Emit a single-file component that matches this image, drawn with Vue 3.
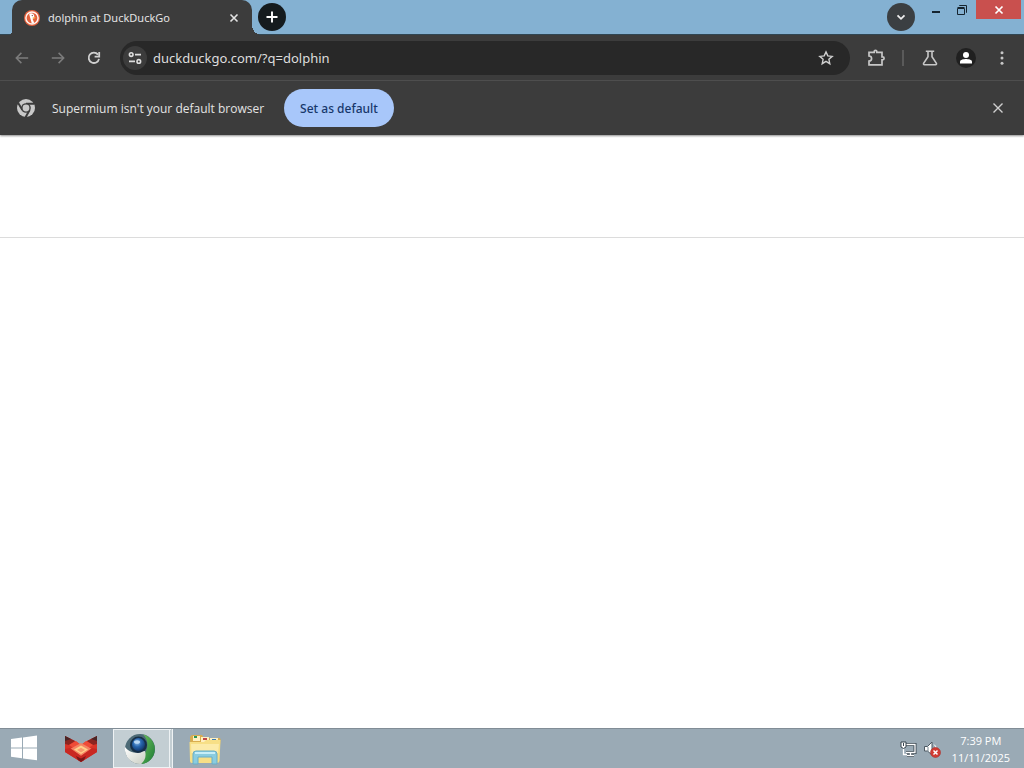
<script setup>
import { ref } from 'vue'

const address = ref('duckduckgo.com/?q=dolphin')
</script>

<template>
  <div class="desktop">
    <header class="tabstrip">
      <div class="tab">
        <svg class="favicon" viewBox="0 0 16 16" aria-hidden="true">
          <circle cx="8" cy="8" r="8" fill="#e3603c" />
          <circle cx="8" cy="8" r="6.1" fill="none" stroke="#fff4ee" stroke-width="1.5" />
          <path d="M5.2 4.2C6 2.8 9.6 3 10.2 5.6L10.4 8L8.6 9L10.2 12.8L7.8 13.4L6.4 8.6Z" fill="#fff" />
          <path d="M8.6 7.4L11.6 7.1L11 8.4L8.8 8.8Z" fill="#f3ae45" />
          <circle cx="8.3" cy="5.6" r=".7" fill="#724a40" />
        </svg>
        <span class="tab-title">dolphin at DuckDuckGo</span>
        <button class="icon-btn tab-close" aria-label="Close tab">
          <svg viewBox="0 0 16 16" width="16" height="16"><path d="M4.5 4.5L11.5 11.5M11.5 4.5L4.5 11.5" stroke="#e3e3e3" stroke-width="1.6" /></svg>
        </button>
      </div>
      <button class="round new-tab" aria-label="New tab">
        <svg viewBox="0 0 16 16" width="16" height="16"><path d="M8 2.5V13.5M2.5 8H13.5" stroke="#fff" stroke-width="1.9" /></svg>
      </button>
      <div class="caption">
        <button class="round search-tabs" aria-label="Search tabs">
          <svg viewBox="0 0 16 16" width="16" height="16"><path d="M4.5 6.3L8 9.8L11.5 6.3" fill="none" stroke="#eee" stroke-width="1.8" /></svg>
        </button>
        <button class="win-btn minimise" aria-label="Minimize">
          <svg viewBox="0 0 12 12" width="12" height="12"><path d="M2 8H10" stroke="#15242f" stroke-width="2" /></svg>
        </button>
        <button class="win-btn restore" aria-label="Restore">
          <svg viewBox="0 0 12 12" width="12" height="12" fill="none" stroke="#15242f"><path d="M1.5 4.5H8.5V10.5H1.5ZM1.5 3.5H8.5M3.5 2V1.5H10.5V8.5H10" /></svg>
        </button>
        <button class="win-btn close" aria-label="Close">
          <svg viewBox="0 0 12 12" width="12" height="12"><path d="M2.5 2.5L9.5 9.5M9.5 2.5L2.5 9.5" stroke="#fff" stroke-width="1.7" /></svg>
        </button>
      </div>
    </header>

    <nav class="toolbar" aria-label="Browser toolbar">
      <div class="nav-btns">
        <button class="icon-btn" aria-label="Back">
          <svg viewBox="0 0 16 16" width="16" height="16" fill="none" stroke="#7c7c7c" stroke-width="1.5"><path d="M14.2 8H2.5M7.4 2.9L2.3 8L7.4 13.1" /></svg>
        </button>
        <button class="icon-btn" aria-label="Forward">
          <svg viewBox="0 0 16 16" width="16" height="16" fill="none" stroke="#7c7c7c" stroke-width="1.5"><path d="M1.8 8H13.5M8.6 2.9L13.7 8L8.6 13.1" /></svg>
        </button>
        <button class="icon-btn" aria-label="Reload">
          <svg viewBox="0 0 16 16" width="16" height="16" fill="none" stroke="#d0d0d0" stroke-width="1.8"><path d="M13 8.8A5.2 5.2 0 1 1 12 4.6" /><path d="M13.2 2V6.6H8.6" /></svg>
        </button>
      </div>
      <form class="omnibox" @submit.prevent>
        <button type="button" class="site-info" aria-label="View site information">
          <svg viewBox="0 0 16 16" width="16" height="16" fill="none" stroke="#dedede" stroke-width="1.6"><circle cx="4.2" cy="4.6" r="1.8" /><path d="M8 4.6H14M2 11.4H8" /><circle cx="11.8" cy="11.4" r="1.8" /></svg>
        </button>
        <input v-model="address" class="address" type="text" aria-label="Address and search bar" spellcheck="false" />
        <button type="button" class="icon-btn" aria-label="Bookmark this tab">
          <svg viewBox="0 0 16 16" width="16" height="16" fill="none" stroke="#d0d0d0" stroke-width="1.4"><path d="M8 1.9L9.8 5.9L14.2 6.4L10.9 9.3L11.8 13.7L8 11.4L4.2 13.7L5.1 9.3L1.8 6.4L6.2 5.9Z" /></svg>
        </button>
      </form>
      <div class="actions">
        <button class="icon-btn" aria-label="Extensions">
          <svg viewBox="0 0 18 18" width="18" height="18" fill="none" stroke="#c7c7c7" stroke-width="1.7"><path d="M2 3.3H7.2V2.6A1.3 1.3 0 0 1 9.8 2.6V3.3H15V7.8H15.6A1.4 1.4 0 0 1 15.6 10.8H15V15.8H2V12.2A2.6 2.6 0 0 0 2 7Z" /></svg>
        </button>
        <span class="divider"></span>
        <button class="icon-btn" aria-label="Experiments">
          <svg viewBox="0 0 18 18" width="18" height="18" fill="none" stroke="#c7c7c7" stroke-width="1.6"><path d="M4.8 2.3H13.2M7 2.5V7.8L2.6 14.3Q2.2 15.6 3.5 15.8H14.5Q15.8 15.6 15.4 14.3L11 7.8V2.5" /></svg>
        </button>
        <button class="profile" aria-label="Profile">
          <svg viewBox="0 0 20 20" width="20" height="20"><circle cx="10" cy="10" r="10" fill="#202020" /><circle cx="10" cy="7" r="3" fill="#fff" /><path d="M4 15.5V13.5C4 11.5 8 10.9 10 10.9S16 11.5 16 13.5V15.5Z" fill="#fff" /></svg>
        </button>
        <button class="icon-btn" aria-label="Menu">
          <svg viewBox="0 0 16 16" width="16" height="16" fill="#c7c7c7"><circle cx="8" cy="2.7" r="1.5" /><circle cx="8" cy="8" r="1.5" /><circle cx="8" cy="13.3" r="1.5" /></svg>
        </button>
      </div>
    </nav>

    <section class="infobar" aria-label="Default browser">
      <svg class="product" viewBox="0 0 20 20" width="20" height="20" aria-hidden="true">
        <circle cx="10" cy="10" r="9" fill="#c9c9c9" />
        <circle cx="10" cy="10" r="4.8" fill="#3c3c3c" />
        <path d="M10 5.8H18.2M6.4 12.1L2.2 5M13.6 12.1L9.6 19.2" fill="none" stroke="#3c3c3c" stroke-width="2" />
        <circle cx="10" cy="10" r="3.4" fill="#c9c9c9" />
      </svg>
      <span class="message">Supermium isn't your default browser</span>
      <button class="default-btn">Set as default</button>
      <button class="icon-btn dismiss" aria-label="Dismiss">
        <svg viewBox="0 0 16 16" width="16" height="16"><path d="M3.5 3.5L12.5 12.5M12.5 3.5L3.5 12.5" stroke="#d0d0d0" stroke-width="1.4" /></svg>
      </button>
    </section>

    <main class="page">
      <div class="page-header"></div>
    </main>

    <footer class="taskbar">
      <button class="task start" aria-label="Start">
        <svg viewBox="0 0 28 28" width="28" height="28" fill="#fff"><path d="M1 4L12 2.5V12.4H1ZM13 2.4L27 .5V12.4H13ZM1 13.4H12V23.3L1 21.8ZM13 13.4H27V25.3L13 23.4Z" /></svg>
      </button>
      <button class="task fox" aria-label="Fox">
        <svg viewBox="0 0 34 28" width="34" height="28">
          <path d="M1 1L11 6L17 10L23 6L33 1V17L17 27L1 17Z" fill="#d93428" />
          <path d="M1 1L11 6L5 10L1 9ZM33 1L23 6L29 10L33 9Z" fill="#8c2520" />
          <path d="M1 1L7 4L1 6ZM33 1L27 4L33 6Z" fill="#4b2525" />
          <path d="M5 10L12 6L17 10L22 6L29 10L17 18Z" fill="#ef4b37" />
          <path d="M6 14L17 8L28 14L17 21Z" fill="#f58363" />
          <path d="M10 14.5L17 10.5L24 14.5L17 19Z" fill="#ffd08b" />
          <path d="M13 15L17 12.7L21 15L17 17.4Z" fill="#f79a6b" />
          <path d="M1 14L6 13L17 21L28 13L33 14V17L17 27L1 17Z" fill="#c92822" />
          <path d="M12 21L17 23.5L22 21L20 25L17 27L14 25Z" fill="#7c1718" />
        </svg>
      </button>
      <button class="task active" aria-label="Supermium">
        <svg viewBox="0 0 32 32" width="32" height="32">
          <defs>
            <linearGradient id="leaf" x1="0" y1="0" x2="1" y2="1"><stop offset="0" stop-color="#6cc05c" /><stop offset="1" stop-color="#1c7a35" /></linearGradient>
            <linearGradient id="silver" x1="0" y1="0" x2="1" y2="1"><stop offset="0" stop-color="#fff" /><stop offset="1" stop-color="#c9cdc2" /></linearGradient>
            <radialGradient id="eye" cx=".4" cy=".35" r=".65"><stop offset="0" stop-color="#8ebcec" /><stop offset=".5" stop-color="#2866ae" /><stop offset="1" stop-color="#143a70" /></radialGradient>
          </defs>
          <circle cx="16" cy="16" r="15" fill="#4c6a76" />
          <path d="M19 1.5A15 15 0 0 1 18 31C17 27 18 24 21 20C25 14 24 6 19 1.5Z" fill="url(#leaf)" />
          <circle cx="14.5" cy="12" r="8.5" fill="#172f48" />
          <path d="M1 14C3 17 8 20 14 20C17 20 19 18 21 18C22.500 23 21 28 17 31A15 15 0 0 1 1 14Z" fill="url(#silver)" />
          <circle cx="14.5" cy="11.500" r="6.5" fill="url(#eye)" />
          <ellipse cx="13" cy="9" rx="3" ry="1.8" fill="#b9d8f5" />
        </svg>
      </button>
      <button class="task explorer" aria-label="File Explorer">
        <svg viewBox="0 0 34 32" width="34" height="32">
          <path d="M2 5Q2 2 5 2H14L16 5H31Q33 5 32.5 8L30 29H3Z" fill="#d9ad4e" />
          <path d="M5 3H12V8H5ZM13 4H21V9H13ZM22 5H30V10H22Z" fill="#fff0c0" />
          <path d="M6 4H9" stroke="#2c9554" stroke-width="2" /><path d="M15 6H19" stroke="#bf4747" stroke-width="2" /><path d="M24 7H28" stroke="#387db5" stroke-width="2" />
          <path d="M1.5 9H16L18 7H32.5L31.5 28Q31 30 29 30H4Q2 30 2 28Z" fill="#f7df86" />
          <path d="M3 11H31L30 20H3.5Z" fill="#fceba9" />
          <path d="M5 31V21Q5 18 8 18H26Q29 18 29 21V31H24V24H10V31Z" fill="#8accdf" stroke="#69aec8" />
          <path d="M7 20H27" stroke="#c7eef8" stroke-width="2" />
        </svg>
      </button>
      <div class="tray">
        <button class="tray-btn" aria-label="Network">
          <svg viewBox="0 0 18 18" width="18" height="18"><path d="M6.5 4.5H16V12.5H7M11.5 13V15.5M8 15.5H15" fill="none" stroke="#37444e" stroke-width="3" /><path d="M6.5 4.5H16V12.5H7M11.5 13V15.5M8 15.5H15M4.5 8V14.5H8" fill="none" stroke="#fff" stroke-width="1.3" /><path d="M2 2H7V7L4.5 8.5L2 7Z" fill="#fff" stroke="#37444e" /><path d="M4.5 3V6" stroke="#37444e" /></svg>
        </button>
        <button class="tray-btn" aria-label="Volume muted">
          <svg viewBox="0 0 18 18" width="18" height="18"><path d="M1.5 6.5H4.5L9 2V15L4.5 11H1.5Z" fill="#fff" stroke="#4c5963" /><path d="M5 7V11" stroke="#7b8992" /><path d="M11 4.5Q13 6 13 8" fill="none" stroke="#fff" /><circle cx="12.5" cy="12.5" r="5" fill="#d13b33" stroke="#a9302b" stroke-width=".6" /><path d="M10.5 10.5L14.5 14.5M14.5 10.5L10.5 14.5" stroke="#fff" stroke-width="1.5" /></svg>
        </button>
        <time class="clock" datetime="2025-11-11T19:39"><span>7:39 PM</span><span>11/11/2025</span></time>
      </div>
    </footer>
  </div>
</template>

<style>
body {
  margin: 0;
}
</style>

<style scoped>
.desktop {
  display: flex;
  flex-direction: column;
  min-height: 100vh;
  background: #fff;
  font-family: "Open Sans", "Noto Sans", sans-serif;
  font-size: 12px;
}

button {
  display: flex;
  align-items: center;
  justify-content: center;
  margin: 0;
  padding: 0;
  border: 0;
  background: none;
  font: inherit;
}

svg {
  display: block;
  flex: none;
}

.icon-btn {
  width: 20px;
  height: 20px;
}

.tabstrip {
  display: flex;
  box-sizing: border-box;
  height: 35px;
  padding-left: 12px;
  background: #84b1d2;
  border-bottom: 1px solid #304653;
}

.tab {
  position: relative;
  display: flex;
  box-sizing: border-box;
  align-items: center;
  width: 240px;
  height: 35px;
  padding: 0 8px 0 12px;
  border-radius: 10px 10px 0 0;
  background: #3c3c3c;
  color: #e3e3e3;
}

.tab::before,
.tab::after {
  position: absolute;
  bottom: 0;
  content: "";
}

.tab::before {
  right: 100%;
  width: 4px;
  height: 4px;
  background: radial-gradient(circle at 0 0, transparent 4px, #3c3c3c 4px);
}

.tab::after {
  left: 100%;
  width: 10px;
  height: 10px;
  background: radial-gradient(circle at 100% 0, transparent 10px, #3c3c3c 10px);
}

.favicon {
  width: 16px;
  height: 16px;
  margin-right: 8px;
}

.tab-title {
  flex: 1;
  font-family: "Noto Sans", sans-serif;
  font-size: 11px;
  white-space: nowrap;
}

.round {
  width: 28px;
  height: 28px;
  border-radius: 50%;
}

.new-tab {
  margin: 3px 0 0 6px;
  background: #151b1e;
}

.caption {
  display: flex;
  margin-left: auto;
}

.search-tabs {
  margin: 3px 8px 0 0;
  background: #3b3f42;
}

.win-btn {
  width: 26px;
  height: 19px;
}

.close {
  width: 45px;
  margin: 0 3px 0 1px;
  background: #c9504e;
}

.toolbar {
  display: flex;
  align-items: center;
  height: 45px;
  padding: 0 12px;
  background: #3c3c3c;
  border-bottom: 1px solid #4a4a4a;
}

.nav-btns {
  display: flex;
  gap: 16px;
  margin-right: 16px;
}

.omnibox {
  display: flex;
  flex: 1;
  box-sizing: border-box;
  align-items: center;
  height: 34px;
  padding: 0 14px 0 3px;
  border-radius: 17px;
  background: #282828;
}

.site-info {
  width: 24px;
  height: 24px;
  border-radius: 50%;
  background: #3c3c3c;
}

.address {
  flex: 1;
  min-width: 0;
  margin: 0;
  padding: 0 6px;
  border: 0;
  outline: 0;
  background: none;
  color: #dedede;
  font-family: "Noto Sans", sans-serif;
  font-size: 13px;
}

.actions {
  display: flex;
  align-items: center;
  gap: 16px;
  margin-left: 16px;
}

.divider {
  width: 2px;
  height: 16px;
  background: #5a5a5a;
}

.infobar {
  display: flex;
  box-sizing: border-box;
  align-items: center;
  height: 54px;
  padding: 0 16px;
  background: #3c3c3c;
  box-shadow: 0 1px 2px #8c8c8c;
  color: #e3e3e3;
}

.message {
  margin: 0 20px 0 16px;
}

.default-btn {
  height: 38px;
  padding: 0 16px;
  border-radius: 19px;
  background: #a8c7fa;
  color: #17376b;
  font-family: "Noto Sans", sans-serif;
  font-weight: 500;
}

.dismiss {
  margin-left: auto;
}

.page {
  flex: 1;
}

.page-header {
  height: 102px;
  border-bottom: 1px solid #dcdcdc;
}

.taskbar {
  display: flex;
  box-sizing: border-box;
  height: 40px;
  border-top: 1px solid #818d96;
  background: #9aaab5;
}

.start {
  width: 48px;
}

.fox {
  width: 65px;
}

.active {
  box-sizing: border-box;
  width: 60px;
  padding-right: 4px;
  border: 1px solid #eef2f4;
  border-right: 4px double #eef2f4;
  background: #c3ced3;
}

.explorer {
  width: 64px;
}

.tray {
  display: flex;
  align-items: center;
  margin-left: auto;
  padding-right: 14px;
}

.tray-btn {
  width: 24px;
  height: 24px;
}

.clock {
  display: flex;
  flex-direction: column;
  margin-left: 8px;
  color: #fff;
  font-size: 11px;
  line-height: 17px;
  text-align: center;
}
</style>
